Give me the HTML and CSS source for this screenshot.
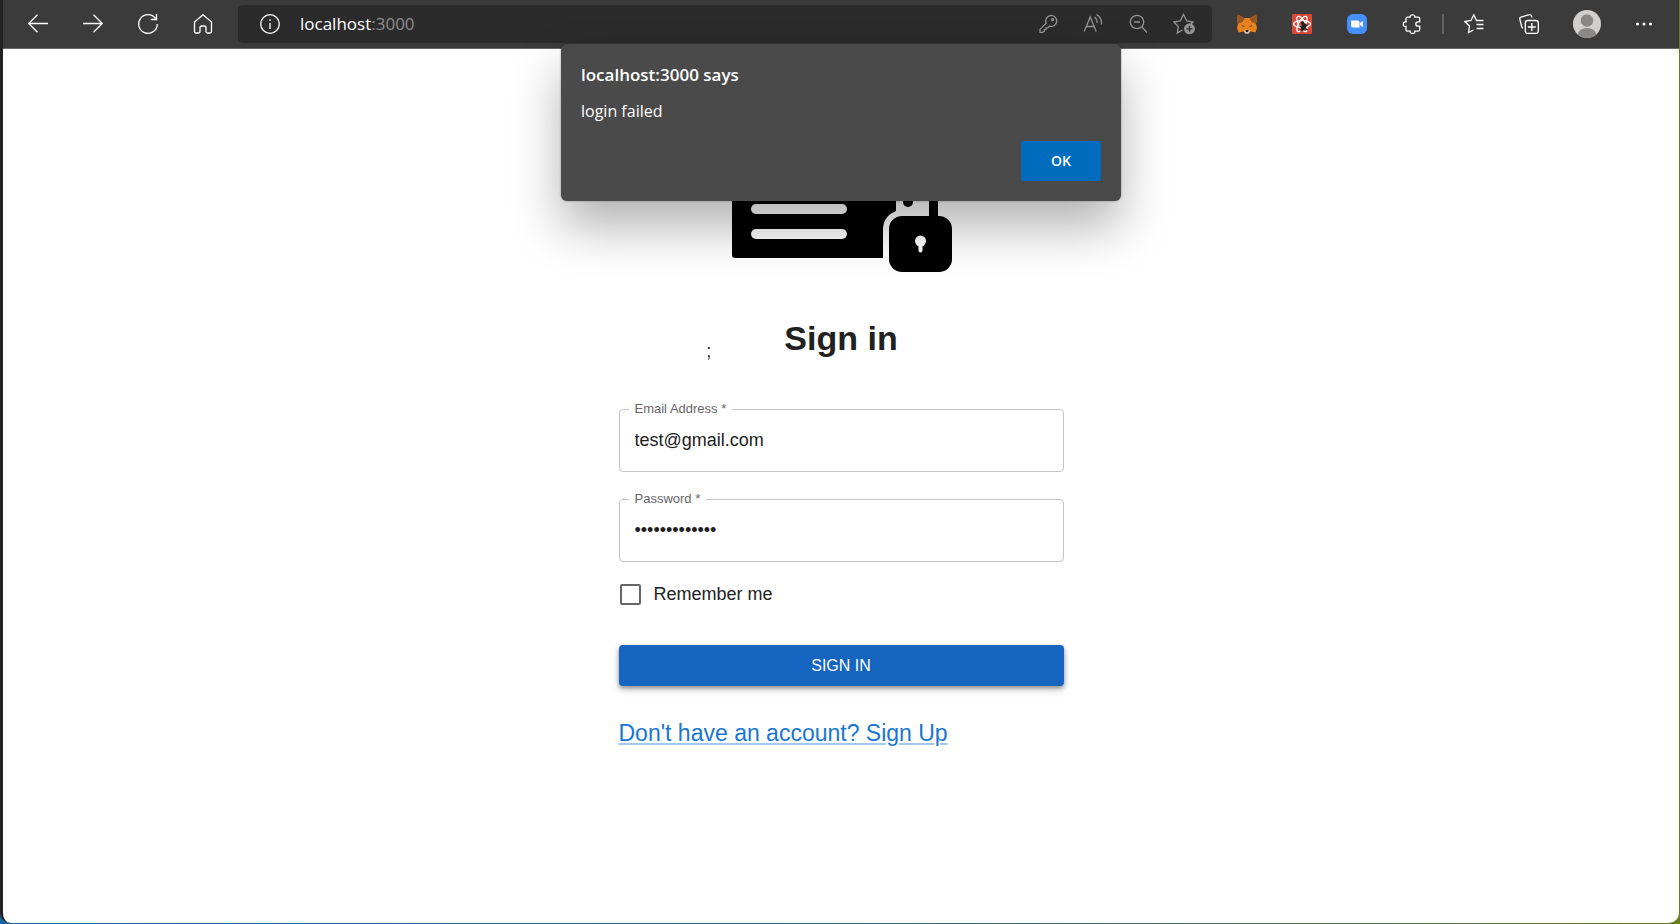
FILE: index.html
```html
<!DOCTYPE html>
<html lang="en">
<head>
<meta charset="utf-8">
<title>Sign in</title>
<link rel="stylesheet" href="styles.css">
</head>
<body>
<div class="window">
  <header class="toolbar">
    <nav class="nav-buttons" aria-label="Navigation">
      <button class="icon-btn" aria-label="Back"><svg viewBox="0 0 20 20"><path d="M20 9.500H0.700M9.500 0.700L0.700 9.500L9.500 18.300"/></svg></button>
      <button class="icon-btn" aria-label="Forward"><svg viewBox="0 0 20 20"><path d="M0 9.500H19.300M10.500 0.700L19.300 9.500L10.500 18.300"/></svg></button>
      <button class="icon-btn" aria-label="Refresh"><svg viewBox="0 0 20 20"><path d="M19.300 10A9.300 9.300 0 1 1 17.500 4.500M18.500 0V5.500H12.700"/></svg></button>
      <button class="icon-btn" aria-label="Home"><svg viewBox="0 0 20 20"><path d="M1.500 8L10 0.800L18.500 8V17.500Q18.500 19 17 19H14.500Q13 19 13 17.500V13.500Q13 12 11.500 12H8.500Q7 12 7 13.500V17.500Q7 19 5.500 19H3Q1.500 19 1.500 17.500Z"/></svg></button>
    </nav>
    <div class="address">
      <svg class="icon" viewBox="0 0 20 20"><circle cx="10" cy="10" r="9.300"/><path d="M10 9V15M10 5.200V7"/></svg>
      <span class="url"><span class="host">localhost</span>:3000</span>
      <div class="address-tools">
        <button class="icon-btn dim" aria-label="Saved passwords"><svg viewBox="0 0 20 20"><path d="M8.200 9.200A5.500 5.500 0 1 1 11.500 12.200L9.800 13.800H8V15.600H6.300V17.300L4.500 18.300H2V15.400Z"/><circle cx="14.500" cy="5.700" r="1"/></svg></button>
        <button class="icon-btn dim" aria-label="Read aloud"><svg viewBox="0 0 20 20"><path d="M1.200 17.500L7.200 3L13.200 17.500M3.300 12.500H11.100M11.500 3Q14.300 5 14.300 9M13.500 0.700Q19 3.500 18.500 10.500"/></svg></button>
        <button class="icon-btn dim" aria-label="Zoom out"><svg viewBox="0 0 20 20"><circle cx="9" cy="8" r="6.700"/><path d="M6 8H12M14 13L19 18.500"/></svg></button>
        <button class="icon-btn dim fav" aria-label="Add to favorites"><svg viewBox="0 0 22 22"><path d="M9.500 17L4.300 20L5.300 13.500L1 9L7.200 8L10.500 1.500L13.800 8L20 9L18 11"/><circle class="solid" cx="16.500" cy="15.800" r="5.500"/><path class="cut" d="M16.500 12.800V18.800M13.500 15.800H19.500"/></svg></button>
      </div>
    </div>
    <div class="extensions">
      <button class="icon-btn" aria-label="MetaMask"><svg viewBox="0 0 20 20"><g stroke="none"><path fill="#e8821e" d="M1 0.500L7 4H13L19 0.500L20 5L19 10L20 14L18.500 18.500L13.500 17.500L11.500 19.500H8.500L6.500 17.500L1.500 18.500L0 14L1 10L0 5Z"/><path fill="#9b5524" d="M1 0.500L7.500 4.500L5.500 8L1 10L0 5ZM19 0.500L12.500 4.500L14.500 8L19 10L20 5Z"/><path fill="#d5c3b3" d="M7 16H13L12 19.500H8Z"/><path fill="#202020" d="M8.500 16H11.500L11 18H9Z"/><path fill="#5a3a2a" d="M5 11L8 12.500L5.500 12.800ZM15 11L12 12.500L14.500 12.800Z"/></g></svg></button>
      <button class="icon-btn" aria-label="React Developer Tools"><svg viewBox="0 0 20 20"><rect width="20" height="20" rx="1" fill="#d94838" stroke="none"/><g stroke="#fff" stroke-width="1.300"><ellipse cx="10" cy="10" rx="8.500" ry="3.400"/><ellipse cx="10" cy="10" rx="8.500" ry="3.400" transform="rotate(60 10 10)"/><ellipse cx="10" cy="10" rx="8.500" ry="3.400" transform="rotate(120 10 10)"/></g><ellipse cx="11.500" cy="13" rx="2.300" ry="4" fill="#222" stroke="none" transform="rotate(30 11.500 13)"/><circle cx="10.500" cy="9" r="1.700" fill="#222" stroke="none"/><path stroke="#222" stroke-width="1.300" d="M7.500 12L16 16M8.500 17L15.500 10.500"/></svg></button>
      <button class="icon-btn" aria-label="Zoom"><svg viewBox="0 0 20 20"><rect width="20" height="20" rx="6" fill="#4590fc" stroke="none"/><path fill="#fff" stroke="none" d="M4 6.500H10.500Q12.500 6.500 12.500 8.500V13.500H6Q4 13.500 4 11.500ZM13 9L16 6.700V13.300L13 11Z"/></svg></button>
      <button class="icon-btn" aria-label="Extensions"><svg viewBox="0 0 20 20"><path d="M5.500 3.200H8.200Q7.800 0.800 10.500 0.800T12.800 3.200H16.200Q17.700 3.200 17.700 4.700V7.800H16.200Q13.800 7.800 13.800 10T16.200 12.200H17.700V15.700Q17.700 17.200 16.200 17.200H12.800Q13.200 19.400 10.500 19.400T8.200 17.200H5.500Q4 17.200 4 15.700V12.400Q1.300 12.800 1.300 10.200T4 8V4.700Q4 3.200 5.500 3.200Z"/></svg></button>
    </div>
    <span class="divider"></span>
    <div class="browser-tools">
      <button class="icon-btn" aria-label="Favorites"><svg viewBox="0 0 20 20"><path d="M9.500 16L4.500 18.500L5.500 12L0.800 7.500L7 6.500L9.800 0.800L12.500 6.500H19.500M12.500 10.500H19.500M12.500 14.500H19.500"/></svg></button>
      <button class="icon-btn" aria-label="Collections"><svg viewBox="0 0 20 20"><rect x="6.300" y="6.500" width="13" height="13" rx="2.500"/><path d="M12.800 9V17M8.800 13H16.800M4 14Q3 14 2.700 12.500L0.800 5Q0.500 3.500 2 3L10.500 0.700Q12 0.500 12.500 2L13 3.500"/></svg></button>
    </div>
    <button class="avatar" aria-label="Profile"><svg viewBox="0 0 28 28"><g stroke="none"><circle cx="14" cy="14" r="14" fill="#d2d0ce"/><circle cx="14" cy="10.500" r="6.200" fill="#8a8886"/><path fill="#8a8886" d="M4.500 24.200Q7 18 14 18T23.500 24.200A14 14 0 0 1 4.500 24.200Z"/></g></svg></button>
    <button class="icon-btn" aria-label="Settings and more"><svg viewBox="0 0 20 20"><g fill="#fff" stroke="none"><circle cx="3.500" cy="10" r="1.500"/><circle cx="10" cy="10" r="1.500"/><circle cx="16.500" cy="10" r="1.500"/></g></svg></button>
  </header>

  <main class="page">
    <form class="login">
      <svg class="logo" viewBox="0 0 222 220" aria-hidden="true">
        <path d="M2 0H166V159Q153 164 153 178V206H5Q2 206 2 203Z"/>
        <g fill="#fff"><rect x="21" y="152" width="96" height="10" rx="5"/><rect x="21" y="177" width="96" height="10" rx="5"/></g>
        <rect x="173" y="120" width="10" height="35" rx="5"/>
        <rect x="199" y="110" width="9" height="60"/>
        <rect x="159" y="164" width="63" height="56" rx="13"/>
        <path fill="#fff" d="M185 189A5.500 5.500 0 1 1 196 189Q196 192 192.500 194.500V199Q190.500 202 188.500 199V194.500Q185 192 185 189Z"/>
      </svg>
      <div class="heading"><span class="stray">;</span><h1>Sign in</h1></div>
      <fieldset class="field"><legend><label for="email">Email Address *</label></legend><input id="email" type="email" value="test@gmail.com"></fieldset>
      <fieldset class="field"><legend><label for="password">Password *</label></legend><input id="password" type="password" value="testpassword1"></fieldset>
      <label class="remember"><input type="checkbox">Remember me</label>
      <button class="submit" type="button">SIGN IN</button>
      <a class="signup" href="#">Don't have an account? Sign Up</a>
    </form>
  </main>
</div>

<div class="dialog" role="alertdialog" aria-labelledby="dialog-title">
  <h2 id="dialog-title">localhost:3000 says</h2>
  <p>login failed</p>
  <button class="ok">OK</button>
</div>
</body>
</html>
```

FILE: styles.css
```css
* { box-sizing: border-box; }

body {
  margin: 0;
  min-height: 100vh;
  display: flex;
  background: linear-gradient(90deg, #1565a0, #2a6a8c 50%, #6b7d1c);
}

button {
  border: 0;
  padding: 0;
  background: none;
  cursor: pointer;
}

svg {
  display: block;
  fill: none;
  stroke: currentColor;
}

.window {
  flex: 1;
  display: flex;
  flex-direction: column;
  margin: 0 1px 1px 0;
  border-left: 3px solid #222;
  border-radius: 0 0 10px 10px;
  background: #fff;
  overflow: hidden;
}

.toolbar {
  display: flex;
  align-items: center;
  height: 49px;
  padding: 0 25px;
  color: #fff;
  background: #3b3b3b;
  border-bottom: 1px solid #696969;
}

.nav-buttons,
.extensions,
.browser-tools {
  display: flex;
  gap: 35px;
}

.icon-btn,
.icon {
  flex: none;
  width: 20px;
  height: 20px;
  color: #fff;
}

.icon-btn svg {
  width: 100%;
  height: 100%;
}

.toolbar svg { stroke-width: 1.3px; }

.address {
  flex: 1;
  display: flex;
  align-items: center;
  height: 38px;
  margin: 0 25px;
  padding: 0 17px 0 22px;
  border-radius: 5px;
  background: #2b2b2b;
}

.url {
  flex: 1;
  margin-left: 20px;
  font: 17px/24px "Open Sans", "Noto Sans", sans-serif;
  color: #8f8f8f;
}

.host { color: #fff; }

.address-tools {
  display: flex;
  align-items: center;
  gap: 25px;
}

.icon-btn.dim { color: #939393; }
.fav { width: 22px; height: 22px; }
.solid { fill: currentColor; stroke: none; }
.cut { stroke: #2b2b2b; }

.divider {
  width: 2px;
  height: 20px;
  margin: 0 20px;
  background: #626262;
}

.avatar {
  width: 28px;
  height: 28px;
  margin: 0 33px 0 34px;
}

.page {
  flex: 1;
  padding: 3px 20px 20px;
  font-family: "Liberation Sans", Arial, sans-serif;
  color: #212121;
}

.login {
  display: flex;
  flex-direction: column;
  max-width: 445px;
  margin: 0 auto;
}

.logo {
  width: 222px;
  height: 220px;
  align-self: center;
  fill: #000;
  stroke: none;
}

.heading {
  display: grid;
  grid-template-columns: 1fr auto 1fr;
  align-items: end;
  margin: 42px 0 39px;
}

.stray {
  justify-self: end;
  margin-right: 73px;
  font-size: 18px;
  line-height: 22px;
}

h1 {
  margin: 0;
  font-size: 34px;
  line-height: 48px;
}

.field {
  min-width: 0;
  height: 71px;
  margin: 0 0 19px;
  padding: 0 9px;
  border: 1px solid #c4c4c4;
  border-radius: 4px;
}

legend {
  padding: 0 6px;
  font-size: 13px;
  line-height: 16px;
  color: #666;
}

.field input {
  width: 100%;
  height: 30px;
  margin-top: 8px;
  padding: 0 6px;
  border: 0;
  outline: 0;
  background: none;
  font: 18px/30px "Liberation Sans", Arial, sans-serif;
  color: #212121;
}

.remember {
  display: flex;
  align-items: center;
  gap: 13px;
  padding: 1px 0 0 1px;
  font-size: 18px;
  line-height: 24px;
}

.remember input {
  appearance: none;
  width: 21px;
  height: 21px;
  margin: 0;
  border: 2px solid #666;
  border-radius: 2px;
}

.submit {
  height: 41px;
  margin: 39px 0 31px;
  border-radius: 4px;
  background: #1565c0;
  box-shadow: 0 2px 4px rgba(0, 0, 0, .35), 0 4px 8px rgba(0, 0, 0, .18);
  font: 16px/24px "Liberation Sans", Arial, sans-serif;
  color: #fff;
}

.signup {
  align-self: flex-start;
  font-size: 23px;
  line-height: 32px;
  color: #1976d2;
  text-decoration-color: #a3c8ed;
  text-decoration-thickness: 2px;
  text-underline-offset: 2px;
}

.dialog {
  position: absolute;
  top: 44px;
  left: calc(50% + 1px);
  transform: translateX(-50%);
  width: 560px;
  padding: 19px 20px 20px;
  display: flex;
  flex-direction: column;
  border-radius: 6px;
  background: #4a4a4a;
  box-shadow: 0 0 2px rgba(0, 0, 0, .4), 0 26px 50px rgba(0, 0, 0, .3);
  font-family: "Open Sans", "Noto Sans", sans-serif;
  color: #fff;
}

.dialog h2 {
  margin: 0 0 12px;
  font-size: 17px;
  font-weight: 600;
  line-height: 24px;
}

.dialog p {
  margin: 0 0 18px;
  font-size: 16px;
  line-height: 24px;
}

.ok {
  align-self: flex-end;
  width: 80px;
  height: 40px;
  border-radius: 2px;
  background: #006cbe;
  font: 600 14px/20px "Open Sans", "Noto Sans", sans-serif;
  color: #fff;
}
```
